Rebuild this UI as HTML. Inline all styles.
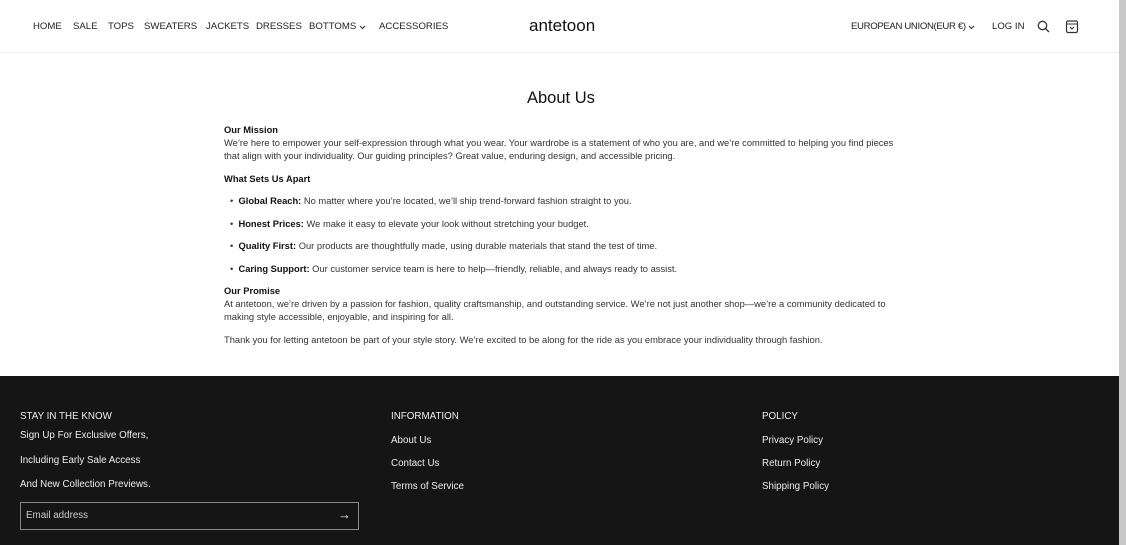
<!DOCTYPE html>
<html><head><meta charset="utf-8"><style>
*{margin:0;padding:0;box-sizing:border-box}
body{width:1126px;height:545px;overflow:hidden;background:#fff;font-family:"Liberation Sans",sans-serif;color:#222;position:relative}
.abs{position:absolute;white-space:nowrap}
.nav{font-size:9.6px;color:#222;top:21px}
.sb{position:absolute;right:0;top:0;width:7px;height:545px;background:#c8c8c8}
.c{font-size:9.35px;color:#333;line-height:13px}
.c b{color:#111}
.f{color:#eee;font-size:9.8px}
</style></head><body>
<div class="abs nav" style="left:33px">HOME</div>
<div class="abs nav" style="left:73px">SALE</div>
<div class="abs nav" style="left:108px">TOPS</div>
<div class="abs nav" style="left:144px">SWEATERS</div>
<div class="abs nav" style="left:206px">JACKETS</div>
<div class="abs nav" style="left:256px">DRESSES</div>
<div class="abs nav" style="left:309px">BOTTOMS</div>
<svg class="abs" style="left:359px;top:25px" width="7" height="5" viewBox="0 0 7 5"><path d="M1 1l2.5 2.5L6 1" fill="none" stroke="#333" stroke-width="1.1"/></svg>
<div class="abs nav" style="left:379px">ACCESSORIES</div>
<div class="abs" style="left:529px;top:16px;font-size:17px;color:#111">antetoon</div>
<div class="abs nav" style="left:851px;letter-spacing:-0.35px">EUROPEAN UNION(EUR €)</div>
<svg class="abs" style="left:968px;top:25px" width="7" height="5" viewBox="0 0 7 5"><path d="M1 1l2.5 2.5L6 1" fill="none" stroke="#333" stroke-width="1.1"/></svg>
<div class="abs nav" style="left:992px">LOG IN</div>
<svg class="abs" style="left:1037px;top:20px" width="13" height="13" viewBox="0 0 13 13"><circle cx="5.5" cy="5.5" r="4.2" fill="none" stroke="#333" stroke-width="1.3"/><path d="M8.5 8.5L12 12" stroke="#333" stroke-width="1.3"/></svg>
<svg class="abs" style="left:1065px;top:19px" width="14" height="15" viewBox="0 0 14 15"><rect x="1.5" y="2" width="11" height="11.5" rx="1.5" fill="none" stroke="#333" stroke-width="1.2"/><path d="M1.5 5h11M5 8l2 2 2-2" fill="none" stroke="#333" stroke-width="1.1"/></svg>
<div style="position:absolute;left:0;top:52px;width:1119px;height:1px;background:#eee"></div>

<div class="abs" style="left:527px;top:89px;font-size:16.5px;color:#111">About Us</div>
<div class="abs c" style="left:224px;top:124px"><b>Our Mission</b><br>We’re here to empower your self-expression through what you wear. Your wardrobe is a statement of who you are, and we’re committed to helping you find pieces<br>that align with your individuality. Our guiding principles? Great value, enduring design, and accessible pricing.</div>
<div class="abs c" style="left:224px;top:173px"><b>What Sets Us Apart</b></div>
<div class="abs c" style="left:230px;top:195px">•&nbsp;&nbsp;<b>Global Reach:</b> No matter where you’re located, we’ll ship trend-forward fashion straight to you.</div>
<div class="abs c" style="left:230px;top:218px">•&nbsp;&nbsp;<b>Honest Prices:</b> We make it easy to elevate your look without stretching your budget.</div>
<div class="abs c" style="left:230px;top:240px">•&nbsp;&nbsp;<b>Quality First:</b> Our products are thoughtfully made, using durable materials that stand the test of time.</div>
<div class="abs c" style="left:230px;top:263px">•&nbsp;&nbsp;<b>Caring Support:</b> Our customer service team is here to help—friendly, reliable, and always ready to assist.</div>
<div class="abs c" style="left:224px;top:285px"><b>Our Promise</b><br>At antetoon, we’re driven by a passion for fashion, quality craftsmanship, and outstanding service. We’re not just another shop—we’re a community dedicated to<br>making style accessible, enjoyable, and inspiring for all.</div>
<div class="abs c" style="left:224px;top:334px">Thank you for letting antetoon be part of your style story. We’re excited to be along for the ride as you embrace your individuality through fashion.</div>

<div style="position:absolute;left:0;top:376px;width:1119px;height:169px;background:#151515"></div>
<div class="abs f" style="left:20px;top:411px">STAY IN THE KNOW</div>
<div class="abs f" style="left:20px;top:430px">Sign Up For Exclusive Offers,</div>
<div class="abs f" style="left:20px;top:455px">Including Early Sale Access</div>
<div class="abs f" style="left:20px;top:479px">And New Collection Previews.</div>
<div style="position:absolute;left:20px;top:502px;width:339px;height:28px;border:1px solid #888"></div>
<div class="abs f" style="left:26px;top:510px;color:#ccc">Email address</div>
<div class="abs f" style="left:338px;top:507px;font-size:13px">→</div>
<div class="abs f" style="left:391px;top:411px">INFORMATION</div>
<div class="abs f" style="left:391px;top:435px">About Us</div>
<div class="abs f" style="left:391px;top:458px">Contact Us</div>
<div class="abs f" style="left:391px;top:481px">Terms of Service</div>
<div class="abs f" style="left:762px;top:411px">POLICY</div>
<div class="abs f" style="left:762px;top:435px">Privacy Policy</div>
<div class="abs f" style="left:762px;top:458px">Return Policy</div>
<div class="abs f" style="left:762px;top:481px">Shipping Policy</div>
<div class="sb"></div>
</body></html>
